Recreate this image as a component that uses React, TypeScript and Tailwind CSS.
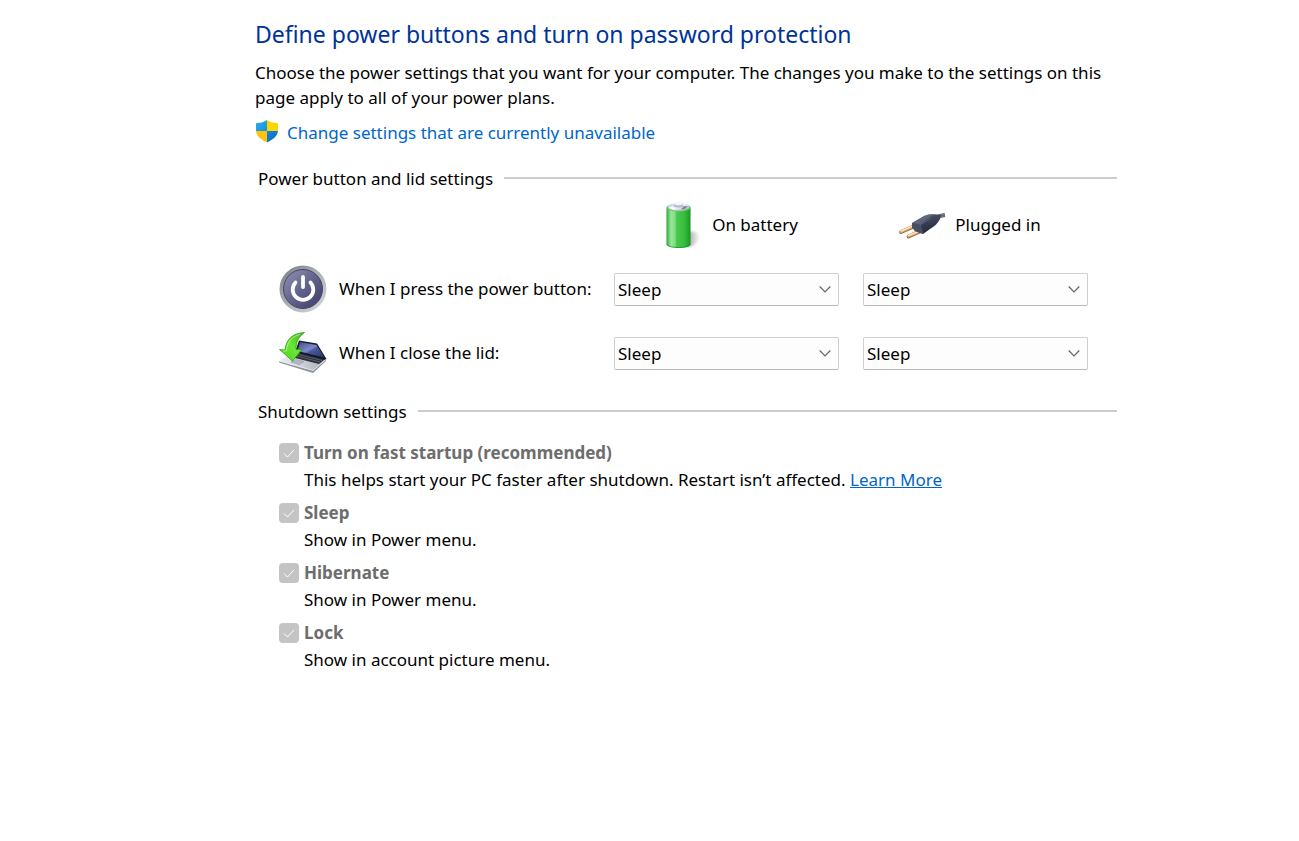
import type { ReactNode } from 'react';

interface PowerSelectProps {
  label: string;
}

interface ShutdownOptionProps {
  id: string;
  title: string;
  children: ReactNode;
}

const POWER_ACTIONS = ['Sleep', 'Do nothing', 'Hibernate', 'Shut down'];

function ShieldIcon() {
  return (
    <svg className="mb-1 h-6 w-6 shrink-0" viewBox="0 0 24 24" aria-hidden="true">
      <defs>
        <clipPath id="shield">
          <path d="M12 1C9 3 6 4 2.800 4 1.800 4 1 4 1 5v6c0 5.500 4 9 11 12.500C19 20 23 16.500 23 11V5c0-1-.8-1-1.800-1C18 4 15 3 12 1Z" />
        </clipPath>
        <linearGradient id="shield-blue" x1="0" y1="0" x2="1" y2="1">
          <stop offset="0" stopColor="#33b1ec" />
          <stop offset="1" stopColor="#1690df" />
        </linearGradient>
        <linearGradient id="shield-deep" x1="0" y1="0" x2="1" y2="1">
          <stop offset="0" stopColor="#1488e0" />
          <stop offset="1" stopColor="#0764b9" />
        </linearGradient>
      </defs>
      <g clipPath="url(#shield)">
        <path fill="url(#shield-blue)" d="M0 0h12v12H0z" />
        <path fill="#ffd500" d="M12 0h12v12H12z" />
        <path fill="#ffc40a" d="M0 12h12v12H0z" />
        <path fill="url(#shield-deep)" d="M12 12h12v12H12z" />
      </g>
    </svg>
  );
}

function BatteryIcon() {
  return (
    <svg className="h-12 w-12 shrink-0" viewBox="0 0 48 48" aria-hidden="true">
      <defs>
        <linearGradient id="cell" x1="0" x2="1">
          <stop offset="0" stopColor="#2a9a35" />
          <stop offset=".08" stopColor="#5cc964" />
          <stop offset=".2" stopColor="#9be69c" />
          <stop offset=".36" stopColor="#7bdc7c" />
          <stop offset=".42" stopColor="#4cc750" />
          <stop offset=".75" stopColor="#36bd3b" />
          <stop offset=".92" stopColor="#22a52b" />
          <stop offset="1" stopColor="#168c22" />
        </linearGradient>
        <linearGradient id="cell-shadow" x1="0" x2="1">
          <stop offset="0" stopColor="#555" stopOpacity=".55" />
          <stop offset="1" stopColor="#555" stopOpacity="0" />
        </linearGradient>
        <linearGradient id="cell-cap" x1="0" x2="1" y2="1">
          <stop offset="0" stopColor="#c4c6da" />
          <stop offset=".5" stopColor="#f3f3f9" />
          <stop offset="1" stopColor="#a5a8bb" />
        </linearGradient>
        <filter id="cell-soft" x="-20%" y="-20%" width="140%" height="140%">
          <feGaussianBlur stdDeviation="1" />
        </filter>
      </defs>
      <path fill="url(#cell-shadow)" filter="url(#cell-soft)" d="M32 30l9 1c5 2 5 6 2 9-3 4-7 6-11 6Z" />
      <path fill="url(#cell)" d="M11.500 6.500V43c0 2.500 5 4 12 4s12-1.500 12-4V6.500Z" />
      <ellipse cx="23.500" cy="6.500" rx="12" ry="4" fill="#74c87b" />
      <path fill="url(#cell-cap)" d="M13 5.500C14 3.500 17 3 19 2.500h9c3 .5 5 1.500 6 3 0 2-4 4-10.500 4S13 7.500 13 5.500Z" />
      <path fill="#babdd2" d="M19 2.500v3c1 1.500 8 1.500 9 0v-3Z" />
      <ellipse cx="23.500" cy="2.500" rx="4.500" ry="1.700" fill="#f4f4fb" />
      <path fill="#8185a1" d="M29 5l4 .5-4 3-3-.5z" />
      <path fill="#fff" d="M16 6l5 1-2 1.500-4-1z" />
      <path fill="none" stroke="#168020" strokeOpacity=".6" d="M12 43c0 2 5 3.500 11.500 3.500S35 45 35 43" />
    </svg>
  );
}

function PlugIcon() {
  return (
    <svg className="h-12 w-12 shrink-0" viewBox="0 0 48 48" aria-hidden="true">
      <defs>
        <linearGradient id="plug" x1="0" y1="0" x2=".4" y2="1">
          <stop offset="0" stopColor="#656a80" />
          <stop offset=".4" stopColor="#42475c" />
          <stop offset="1" stopColor="#22263a" />
        </linearGradient>
      </defs>
      <path fill="none" stroke="#6d7076" strokeWidth="4" d="M38 16.500c3-1.500 5-2 9-2.500" />
      <g strokeLinecap="round">
        <path stroke="#976b3c" strokeWidth="3.800" d="M3 31l14-6M10.500 35.500l13.500-6" />
        <path stroke="#e3b57c" strokeWidth="2.600" d="M3 30.500l14-6M10.500 35l13.500-6" />
        <path stroke="#fff1d3" strokeWidth="1.200" d="M3 30l12-5M10.500 34.500l12-5" />
      </g>
      <path fill="url(#plug)" d="M14 22l12-7c4-2 8-2 13-1.500l4 .5-1 4c-2 4-5 7-10 10l-7 5-8-3-3-4Z" />
      <path fill="#71768c" d="M14 22l12-7c3-1.500 6-2 9-1.500L22 24Z" opacity=".6" />
      <path fill="#4a4f67" d="M14 22l8.500 2 3.500 9-9-3-3-4Z" />
      <path stroke="#8489a0" strokeOpacity=".4" d="M22 24l11-7" />
    </svg>
  );
}

function PowerIcon() {
  return (
    <svg className="h-12 w-12 shrink-0" viewBox="0 0 48 48" aria-hidden="true">
      <defs>
        <linearGradient id="ring" x1="0" y1="0" x2="1" y2="1">
          <stop offset="0" stopColor="#77797f" />
          <stop offset=".45" stopColor="#a9abb0" />
          <stop offset="1" stopColor="#d9dadd" />
        </linearGradient>
        <linearGradient id="disc" x1="0" y1="0" x2="1" y2="1">
          <stop offset="0" stopColor="#9293b3" />
          <stop offset=".5" stopColor="#62638b" />
          <stop offset="1" stopColor="#3b3c66" />
        </linearGradient>
      </defs>
      <circle cx="24" cy="24" r="23.500" fill="url(#ring)" />
      <circle cx="24" cy="24" r="19.500" fill="url(#disc)" stroke="#45466a" />
      <path
        fill="none"
        stroke="#fff"
        strokeWidth="3.800"
        strokeLinecap="round"
        d="M16.500 17.500a10.300 10.300 0 1 0 15 0M24 12v10"
      />
    </svg>
  );
}

function LidIcon() {
  return (
    <svg className="h-12 w-12 shrink-0" viewBox="0 0 48 48" aria-hidden="true">
      <defs>
        <linearGradient id="screen" x1="0" y1="0" x2="1" y2="1">
          <stop offset="0" stopColor="#3c4a8c" />
          <stop offset=".45" stopColor="#7c8bc8" />
          <stop offset=".55" stopColor="#4a5aa0" />
          <stop offset="1" stopColor="#27326d" />
        </linearGradient>
        <linearGradient id="deck" x1="0" x2="1">
          <stop offset="0" stopColor="#f0f1f5" />
          <stop offset="1" stopColor="#a9adb8" />
        </linearGradient>
        <linearGradient id="arrow" x1="1" y1="0" x2="0" y2="1">
          <stop offset="0" stopColor="#3db81e" />
          <stop offset=".5" stopColor="#6be634" />
          <stop offset="1" stopColor="#48d01c" />
        </linearGradient>
      </defs>
      <path fill="url(#deck)" d="M0 32l14-9 33 7-13 12Z" />
      <path fill="#2c303c" d="M14 24l4-2 28 8-6 5-28-7Z" />
      <path fill="none" stroke="#767c8c" strokeWidth=".6" d="M14 26l27 7M16 24.500l27 7" />
      <path fill="#b4b8c3" stroke="#8a8f9c" strokeWidth=".5" d="M12 33l5-2.500 8 2-5 3Z" />
      <path fill="#171a26" d="M20 11.500l18 3 9.500 15.500-1 1L16 23Z" />
      <path fill="url(#screen)" d="M21 13l16.500 3 8 12.500-27-6.500Z" />
      <path fill="#8b909d" d="M0 32l34 9.500L47 30v2L34 44 0 33.500Z" />
      <path fill="none" stroke="#fff" strokeWidth=".7" d="M0 32l34 9.500L47 30.500" />
      <path
        fill="url(#arrow)"
        stroke="#249811"
        strokeWidth=".7"
        strokeLinejoin="round"
        d="M25.500 3.500C14 4 7 10 6 21l-5.500-.5L13.500 32 23 20.500l-6-.2C17 13 19.500 8 25.500 3.500Z"
      />
      <path fill="none" stroke="#c4fd95" strokeOpacity=".7" d="M21 5.500C13 7.500 8 13 7.500 22H4" />
    </svg>
  );
}

function PowerSelect({ label }: PowerSelectProps) {
  return (
    <div className="relative">
      <select
        aria-label={label}
        className="block h-[33px] w-full appearance-none rounded-xs border border-[#d0d0d0] border-b-[#b8b8b8] bg-[#fdfdfd] px-[3px] pt-[2px] text-[17px] leading-6 text-black"
      >
        {POWER_ACTIONS.map((action) => (
          <option key={action}>{action}</option>
        ))}
      </select>
      <svg
        className="pointer-events-none absolute top-3 right-2 h-2 w-3"
        viewBox="0 0 12 8"
        fill="none"
        stroke="#666"
        strokeWidth="1.200"
        aria-hidden="true"
      >
        <path d="M.7 1.500 6 6.800l5.300-5.300" />
      </svg>
    </div>
  );
}

function SectionHeading({ children }: { children: ReactNode }) {
  return (
    <div className="flex items-center gap-[11px] pl-[3px]">
      <h2 className="leading-6">{children}</h2>
      <div className="mb-[3px] h-[2px] flex-1 bg-[#cccccc]" />
    </div>
  );
}

function ShutdownOption({ id, title, children }: ShutdownOptionProps) {
  return (
    <li className="flex gap-[5px]">
      <span className="relative mt-1 h-5 w-5 shrink-0">
        <input
          id={id}
          type="checkbox"
          defaultChecked
          disabled
          className="block h-5 w-5 appearance-none rounded-sm bg-[#c4c4c4]"
        />
        <svg
          className="pointer-events-none absolute inset-0 h-5 w-5"
          viewBox="0 0 20 20"
          fill="none"
          stroke="#fff"
          strokeWidth="1"
          aria-hidden="true"
        >
          <path d="M5 10.500 8.500 14l6.500-7" />
        </svg>
      </span>
      <div className="leading-[27px]">
        <label htmlFor={id} className="block font-bold text-[#6d6d6d]">
          {title}
        </label>
        <p>{children}</p>
      </div>
    </li>
  );
}

export default function App() {
  return (
    <main className="bg-white pt-[18px] pr-[182px] pb-10 pl-[255px] font-['Noto_Sans',sans-serif] text-[17px] text-black">
      <h1 className="text-[23px] leading-8 text-[#003399]">
        Define power buttons and turn on password protection
      </h1>
      <p className="mt-[10px] leading-[25px]">
        Choose the power settings that you want for your computer. The changes you make to the settings on this
        page apply to all of your power plans.
      </p>
      <a href="#" className="mt-[9px] flex w-fit items-center gap-2 leading-7 text-[#0066cc]">
        <ShieldIcon />
        Change settings that are currently unavailable
      </a>

      <section className="mt-5">
        <SectionHeading>Power button and lid settings</SectionHeading>
        <div className="mt-[2px] grid auto-rows-[64px] grid-cols-[335px_225px_225px] items-center gap-x-6">
          <div />
          <div className="flex items-center justify-center gap-[9px]">
            <BatteryIcon />
            On battery
          </div>
          <div className="flex items-center justify-center gap-[9px] pr-3">
            <PlugIcon />
            Plugged in
          </div>

          <div className="flex items-center gap-3 pl-6">
            <PowerIcon />
            <span className="whitespace-nowrap">When I press the power button:</span>
          </div>
          <PowerSelect label="When I press the power button, on battery" />
          <PowerSelect label="When I press the power button, plugged in" />

          <div className="flex items-center gap-3 pl-6">
            <LidIcon />
            <span className="whitespace-nowrap">When I close the lid:</span>
          </div>
          <PowerSelect label="When I close the lid, on battery" />
          <PowerSelect label="When I close the lid, plugged in" />
        </div>
      </section>

      <section className="mt-[15px]">
        <SectionHeading>Shutdown settings</SectionHeading>
        <ul className="mt-[15px] flex flex-col gap-[6px] pl-6">
          <ShutdownOption id="fast-startup" title="Turn on fast startup (recommended)">
            This helps start your PC faster after shutdown. Restart isn’t affected.{' '}
            <a href="#" className="text-[#0066cc] underline">
              Learn More
            </a>
          </ShutdownOption>
          <ShutdownOption id="sleep" title="Sleep">
            Show in Power menu.
          </ShutdownOption>
          <ShutdownOption id="hibernate" title="Hibernate">
            Show in Power menu.
          </ShutdownOption>
          <ShutdownOption id="lock" title="Lock">
            Show in account picture menu.
          </ShutdownOption>
        </ul>
      </section>
    </main>
  );
}
